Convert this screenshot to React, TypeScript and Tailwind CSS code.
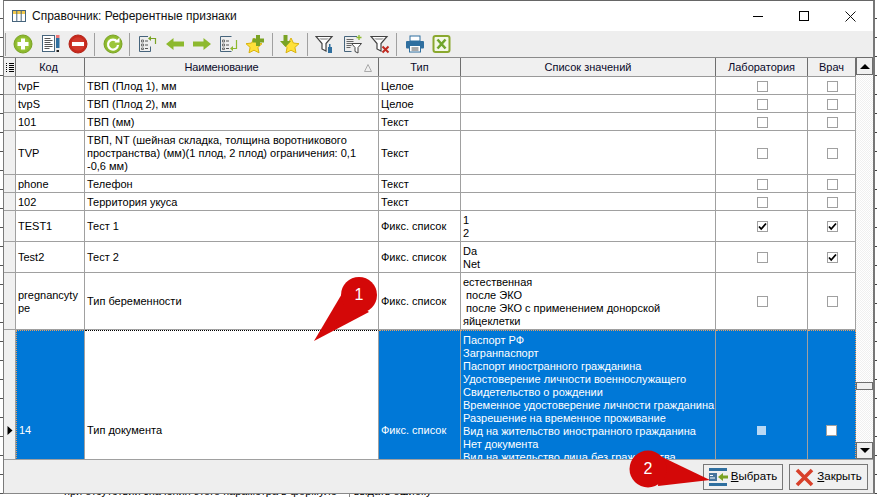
import React from "react";

const font = "font-['Liberation_Sans','Noto_Sans',sans-serif]";

const Sep = () => <div className="w-px h-[23px] bg-[#a0a0a0]" />;

const Ico = ({ children, w = 20, cls = "" }: { children: React.ReactNode; w?: number; cls?: string }) => (
  <svg width={w} height="20" viewBox={`0 0 ${w} 20`} className={cls}>{children}</svg>
);

const Plus = () => (
  <Ico>
    <circle cx="10" cy="10" r="9" fill="#8db92e" stroke="#7aa324" />
    <circle cx="10" cy="10" r="6.8" fill="#9cc63b" />
    <path d="M8 4.5h4v3.5h3.5v4H12v3.5H8V12H4.5V8H8z" fill="#fff" />
  </Ico>
);
const NoteEdit = () => (
  <Ico>
    <rect x="1.5" y="1.5" width="12" height="16" fill="#fff" stroke="#46647c" />
    <path d="M3.5 4.5h6M3.5 6.500h8M3.500 8.500h6M3.500 10.500h8M3.500 12.500h8M3.500 14.500h5" stroke="#555" strokeWidth="1" />
    <rect x="15" y="1" width="3.5" height="3" fill="#e77" />
    <rect x="15" y="4" width="3.5" height="10" fill="#2f6f9f" />
    <rect x="15.5" y="16" width="2.5" height="2" fill="#222" />
  </Ico>
);
const Minus = () => (
  <Ico>
    <circle cx="10" cy="10" r="9" fill="#c8281c" stroke="#b32317" />
    <circle cx="10" cy="10" r="6.8" fill="#d1392c" />
    <rect x="4" y="8" width="12" height="4" fill="#fff" />
  </Ico>
);
const Refresh = () => (
  <Ico>
    <circle cx="10" cy="10" r="9" fill="#8db92e" stroke="#7aa324" />
    <circle cx="10" cy="10" r="6.8" fill="#9cc63b" />
    <path d="M14 7.500A5 5 0 1 0 15 11" fill="none" stroke="#fff" strokeWidth="2.200" />
    <path d="M11.500 8.500h5v-5z" fill="#fff" />
  </Ico>
);
const ListLeft = () => (
  <Ico>
    <path d="M10 2.500H1.500v15h11v-5" fill="none" stroke="#46647c" />
    <path d="M3.500 6h2v2h-2zM3.500 10h2v2h-2zM3.500 14h2v1.500h-2z" fill="none" stroke="#555" strokeWidth=".8" />
    <path d="M7 7h3M7 11h3M7 14.500h3" stroke="#555" />
    <path d="M17.500 10V4.500h-5" fill="none" stroke="#7aa324" strokeWidth="1.200" />
    <path d="M13 2l-3 2.500 3 2.500z" fill="#7aa324" />
  </Ico>
);
const ListRight = () => (
  <Ico>
    <path d="M12.500 2.500H1.500v15h11" fill="none" stroke="#46647c" />
    <path d="M3.500 6h2v2h-2zM3.500 10h2v2h-2zM3.500 14h2v1.500h-2z" fill="none" stroke="#555" strokeWidth=".8" />
    <path d="M7 7h3M7 11h3M7 14.500h3" stroke="#555" />
    <path d="M17.500 6v8.500h-4" fill="none" stroke="#8db92e" strokeWidth="1.200" />
    <path d="M14 12l-3 2.500 3 2.500z" fill="#8db92e" />
  </Ico>
);
const ArrowL = () => (
  <Ico>
    <path d="M1 10l7.500-6v3.500H19v5H8.500V16z" fill="#8db92e" />
  </Ico>
);
const ArrowR = () => (
  <Ico>
    <path d="M19 10l-7.500-6v3.500H1v5h10.500V16z" fill="#8db92e" />
  </Ico>
);
const starPath = "M9 4l2.400 5 5.600.700-4.100 3.700 1.100 5.400L9 16.200 4 18.800l1.100-5.400L1 9.700l5.600-.700z";
const StarPlus = () => (
  <Ico>
    <path d={starPath} fill="#ffe13a" stroke="#d9b311" />
    <path d="M11 1h4v3.500h4v4h-4V12h-4V8.500H7.500v-4H11z" fill="#7aa324" />
  </Ico>
);
const StarDown = () => (
  <Ico>
    <g transform="translate(2 0)"><path d={starPath} fill="#ffe13a" stroke="#d9b311" /></g>
    <path d="M3.500 1h4v6H11l-5.500 6L0 7h3.500z" fill="#7aa324" />
  </Ico>
);
const funnel = "M1 2.500h16l-6 7v7.500l-4-2v-5.500z";
const FilterTool = () => (
  <Ico>
    <path d={funnel} fill="#fff" stroke="#444" strokeWidth="1.200" />
    <path d="M4 4h10l-2 2H6z" fill="#bbb" />
    <path d="M14 10h1.500v3H17v6h-4v-6h1z" fill="#2f6f9f" />
  </Ico>
);
const DocFilter = () => (
  <Ico>
    <path d="M14 2.500H1.500v15h7" fill="none" stroke="#46647c" />
    <path d="M3.500 5.500h7M3.500 7.500h7M3.500 9.500h5M3.500 11.500h5M3.500 13.500h4" stroke="#666" />
    <path d="M8.500 9.500h10l-3.500 4v5.500l-3-1.500v-4z" fill="#fff" stroke="#444" />
    <path d="M16 1v5M13.500 3.500h5" stroke="#8db92e" strokeWidth="1.300" />
  </Ico>
);
const FilterX = () => (
  <Ico>
    <path d={funnel} fill="#fff" stroke="#444" strokeWidth="1.200" />
    <path d="M4 4h10l-2 2H6z" fill="#bbb" />
    <path d="M12.500 12.500l6 6M18.500 12.500l-6 6" stroke="#c02a20" strokeWidth="2" />
  </Ico>
);
const Printer = () => (
  <Ico>
    <rect x="5" y="2" width="10" height="5" fill="#fff" stroke="#2f6f9f" />
    <rect x="1" y="7" width="18" height="7.500" rx="1" fill="#2f6f9f" />
    <rect x="4.500" y="11.500" width="11" height="6.500" fill="#fff" stroke="#2f6f9f" />
    <path d="M6.500 14h7M6.500 16h7" stroke="#555" />
  </Ico>
);
const Excel = () => (
  <Ico>
    <rect x="1.500" y="2" width="16" height="16" rx="2" fill="#f4f8e8" stroke="#8aa82e" strokeWidth="2" />
    <path d="M5.500 5.500l8 9M13.500 5.500l-8 9" stroke="#6fa52b" strokeWidth="2.600" />
  </Ico>
);

const CB = ({ on, sel }: { on?: boolean; sel?: boolean }) => (
  <div className="size-[11px] border border-[#a0a0a0] bg-white flex items-center justify-center">
    {on && !sel && (
      <svg width="9" height="9" viewBox="0 0 9 9">
        <path d="M1 4.500l2.200 2.500L8 1.500" fill="none" stroke="#000" strokeWidth="1.800" />
      </svg>
    )}
  </div>
);

type Row = { h: string; code: string; name: string; type: string; list?: string; a?: boolean; b?: boolean };

const rows: Row[] = [
  { h: "h-[18px]", code: "tvpF", name: "ТВП (Плод 1), мм", type: "Целое" },
  { h: "h-[18px]", code: "tvpS", name: "ТВП (Плод 2), мм", type: "Целое" },
  { h: "h-[18px]", code: "101", name: "ТВП (мм)", type: "Текст" },
  { h: "h-[44px]", code: "TVP", name: "ТВП, NT (шейная складка, толщина воротникового\nпространства) (мм)(1 плод, 2 плод) ограничения: 0,1\n-0,6 мм)", type: "Текст" },
  { h: "h-[18px]", code: "phone", name: "Телефон", type: "Текст" },
  { h: "h-[18px]", code: "102", name: "Территория укуса", type: "Текст" },
  { h: "h-[31px]", code: "TEST1", name: "Тест 1", type: "Фикс. список", list: "1\n2", a: true, b: true },
  { h: "h-[31px]", code: "Test2", name: "Тест 2", type: "Фикс. список", list: "Da\nNet", b: true },
  { h: "h-[57px]", code: "pregnancyty\npe", name: "Тип беременности", type: "Фикс. список", list: "естественная\n после ЭКО\n после ЭКО с применением донорской\nяйцеклетки" },
];

const cols = "grid grid-cols-[12px_69px_294px_82px_255px_92px_48px]";
const cell = "border-r border-b border-[#a0a0a0] flex items-center pl-[2px] pt-px whitespace-pre leading-[13px] overflow-hidden";
const head = "border-r border-[#6e6e6e] flex items-center justify-center";
const dotTop = "border-t border-t-[#e8a060] [border-top-style:dotted]";

const selList = "Паспорт РФ\nЗагранпаспорт\nПаспорт иностранного гражданина\nУдостоверение личности военнослужащего\nСвидетельство о рождении\nВременное удостоверение личности гражданина\nРазрешение на временное проживание\nВид на жительство иностранного гражданина\nНет документа\nВид на жительство лица без гражданства";

export default function App() {
  return (
    <div className={`${font} relative w-[877px] h-[497px] overflow-hidden bg-[#f0f0f0] text-[11px] text-black`}>
      <div className="flex h-[494px]">
        <div className="w-[3px] bg-[repeating-linear-gradient(180deg,#fff_0,#fff_18px,#555_18px,#555_19px)]" />
        <div className="w-[872px] border-l border-r-2 border-t border-l-[#7a7a7a] border-r-[#777] border-t-[#666] border-b border-b-[#888] flex flex-col">
          {/* title bar */}
          <div className="h-[30px] shrink-0 bg-white flex items-center">
            <svg width="16" height="16" viewBox="0 0 16 16" className="ml-[7px]">
              <rect x="1.500" y="2.500" width="13" height="11" fill="#fff" stroke="#46647c" />
              <rect x="2" y="3" width="12" height="3" fill="#f2c94c" />
              <path d="M5.800 3v10M10.200 3v10" stroke="#46647c" />
            </svg>
            <span className="ml-[5px] text-[12px] text-[#111]">Справочник: Референтные признаки</span>
            <div className="ml-auto flex items-center">
              <div className="w-[46px] flex justify-center"><div className="w-[10px] h-px bg-black" /></div>
              <div className="w-[46px] flex justify-center"><div className="size-[10px] border border-black" /></div>
              <div className="w-[46px] flex justify-center">
                <svg width="11" height="11" viewBox="0 0 11 11"><path d="M.5.500l10 10M10.500.500l-10 10" stroke="#111" /></svg>
              </div>
            </div>
          </div>
          {/* toolbar */}
          <div className="h-[26px] shrink-0 bg-[#eeeeee] flex items-center pl-[1px]">
            <Sep />
            <div className="flex items-center gap-[7px] ml-[7px]"><Plus /><div className="ml-px flex"><NoteEdit /></div><Minus /></div>
            <div className="ml-[6px]"><Sep /></div>
            <div className="ml-[8px]"><Refresh /></div>
            <div className="ml-[6px]"><Sep /></div>
            <div className="flex items-center gap-[7px] ml-[8px]"><ListLeft /><ArrowL /><ArrowR /><ListRight /><div className="ml-[-1px] flex"><StarPlus /></div></div>
            <div className="ml-[7px]"><Sep /></div>
            <div className="ml-[7px]"><StarDown /></div>
            <div className="ml-[7px]"><Sep /></div>
            <div className="flex items-center gap-[7px] ml-[7px]"><FilterTool /><div className="ml-px flex"><DocFilter /></div><FilterX /></div>
            <div className="ml-[6px]"><Sep /></div>
            <div className="flex items-center gap-[7px] ml-[8px]"><Printer /><Excel /></div>
          </div>
          {/* grid + scrollbar */}
          <div className="h-[403px] shrink-0 flex border-b border-[#a0a0a0]">
            <div className="w-[852px] flex flex-col overflow-hidden border-t border-[#8a8a8a] bg-white">
              <div className={`${cols} h-[19px] shrink-0 bg-[#f0f0f0] border-b border-[#999] text-[#0a0a2a]`}>
                <div className={head}>
                  <svg width="8" height="9" viewBox="0 0 8 9"><path d="M0 .5h1M3 .5h5M0 2.500h1M3 2.500h5M0 4.500h1M3 4.500h5M0 6.500h1M3 6.500h5M0 8.500h1M3 8.500h5" stroke="#000" /></svg>
                </div>
                <div className={`${head} pr-[3px]`}>Код</div>
                <div className={`${head} relative pr-[20px]`}>
                  <span className="tracking-[-0.2px]">Наименование</span>
                  <svg width="8" height="8" viewBox="0 0 8 8" className="absolute right-[6px] top-[6px]"><path d="M4 .5L7.500 7.500H.5z" fill="none" stroke="#aaa" /></svg>
                </div>
                <div className={head}>Тип</div>
                <div className={head}>Список значений</div>
                <div className={head}>Лаборатория</div>
                <div className={head}>Врач</div>
              </div>
              {rows.map((r) => (
                <div key={r.code} className={`${cols} ${r.h} shrink-0`}>
                  <div className="bg-[#f0f0f0] border-r border-b border-[#a0a0a0]" />
                  <div className={cell}>{r.code}</div>
                  <div className={cell}>{r.name}</div>
                  <div className={cell}>{r.type}</div>
                  <div className={cell}>{r.list ?? ""}</div>
                  <div className={`${cell} justify-center pl-0`}><CB on={r.a} /></div>
                  <div className={`${cell} justify-center pl-0`}><CB on={r.b} /></div>
                </div>
              ))}
              <div className={`${cols} h-[200px] shrink-0 text-white`}>
                <div className="bg-[#f0f0f0] border-r border-[#a0a0a0] flex items-center justify-center">
                  <svg width="6" height="9" viewBox="0 0 6 9"><path d="M.5 0L5.500 4.500.5 9z" fill="#000" /></svg>
                </div>
                <div className={`bg-[#0078d7] border-r border-[#a0a0a0] ${dotTop} border-l border-l-[#e8a060] [border-left-style:dotted] flex items-center pl-[2px]`}>14</div>
                <div className="bg-white text-black border-r border-[#a0a0a0] border-t border-t-black [border-top-style:dotted] flex items-center pl-[2px]">Тип документа</div>
                <div className={`bg-[#0078d7] border-r border-[#a0a0a0] ${dotTop} flex items-center pl-[2px]`}>Фикс. список</div>
                <div className={`bg-[#0078d7] border-r border-[#a0a0a0] ${dotTop} pl-[2px] pt-[3px] whitespace-pre leading-[13px] overflow-hidden`}>{selList}</div>
                <div className={`bg-[#0078d7] border-r border-[#a0a0a0] ${dotTop} flex items-center justify-center`}>
                  <div className="size-[9px] bg-[#b8d8f4]" />
                </div>
                <div className={`bg-[#0078d7] ${dotTop} border-r border-r-[#e8a060] [border-right-style:dotted] flex items-center justify-center`}>
                  <CB sel />
                </div>
              </div>
            </div>
            {/* scrollbar */}
            <div className="w-[17px] flex flex-col bg-[repeating-conic-gradient(#f0f0f0_0_25%,#fff_0_50%)] bg-[length:2px_2px]">
              <div className="h-[18px] border border-[#6e6e6e] bg-[#f0f0f0] flex items-center justify-center">
                <svg width="10" height="5" viewBox="0 0 10 5"><path d="M5 0l5 5H0z" fill="#000" /></svg>
              </div>
              <div className="flex-1 flex flex-col justify-end pb-[52px]">
                <div className="h-[8px] border border-[#6e6e6e] bg-[#f0f0f0]" />
              </div>
              <div className="h-[17px] border border-[#6e6e6e] bg-[#f0f0f0] flex items-center justify-center">
                <svg width="10" height="5" viewBox="0 0 10 5"><path d="M5 5l5-5H0z" fill="#000" /></svg>
              </div>
            </div>
          </div>
          {/* footer */}
          <div className="flex-1 bg-[#eeeeee] flex items-center justify-end gap-[6px] pr-[5px] pt-px">
            <button className="w-[80px] h-[26px] border border-[#777] bg-[#f0f0f0] flex items-center justify-center gap-[3px] text-[11.500px]">
              <svg width="19" height="19" viewBox="0 0 19 19">
                <rect x="0" y="0" width="18" height="3" fill="#2f6f9f" />
                <rect x="0" y="5" width="8" height="8" fill="#46749c" />
                <path d="M1 7.500h3M1 10h5" stroke="#fff" />
                <rect x="0" y="15" width="18" height="3" fill="#2f6f9f" />
                <path d="M9 9l5-4v2.500h5v3h-5V13z" fill="#7aa324" />
              </svg>
              <span><u>В</u>ыбрать</span>
            </button>
            <button className="w-[79px] h-[26px] border border-[#777] bg-[#f0f0f0] flex items-center justify-center gap-[3px] text-[11.500px]">
              <svg width="19" height="19" viewBox="0 0 19 19">
                <path d="M2 2l15 15M17 2L2 17" stroke="#d8402a" strokeWidth="3.600" />
              </svg>
              <span><u>З</u>акрыть</span>
            </button>
          </div>
        </div>
        <div className="w-[2px] bg-[repeating-linear-gradient(180deg,#fff_0,#fff_18px,#444_18px,#444_19px)]" />
      </div>
      <div className="h-[3px] bg-white overflow-hidden pl-[64px] flex">
        <span className="mt-[-9px] leading-[13px] whitespace-pre">при отсутствии значения этого параметра в формуле</span>
        <span className="mt-[-9px] leading-[13px] whitespace-pre ml-[12px] border-l border-[#888] pl-[4px]">выдать ошибку</span>
      </div>

      {/* callouts */}
      <div className="absolute left-[296px] top-[270px] w-[90px] h-[80px]">
        <svg width="90" height="80" className="absolute inset-0">
          <path d="M18 71 L47 22 L73 42z" fill="#d40808" />
          <circle cx="63" cy="25" r="18" fill="#d40808" />
        </svg>
        <span className="absolute left-[53px] top-[16px] w-[20px] text-center text-white text-[16px] leading-[18px]">1</span>
      </div>
      <div className="absolute left-[628px] top-[448px] w-[90px] h-[44px]">
        <svg width="90" height="44" className="absolute inset-0">
          <path d="M82 32 L32 8 L30 38z" fill="#d40808" />
          <circle cx="20" cy="21" r="18.500" fill="#d40808" />
        </svg>
        <span className="absolute left-[10px] top-[12px] w-[20px] text-center text-white text-[16px] leading-[18px]">2</span>
      </div>
    </div>
  );
}
